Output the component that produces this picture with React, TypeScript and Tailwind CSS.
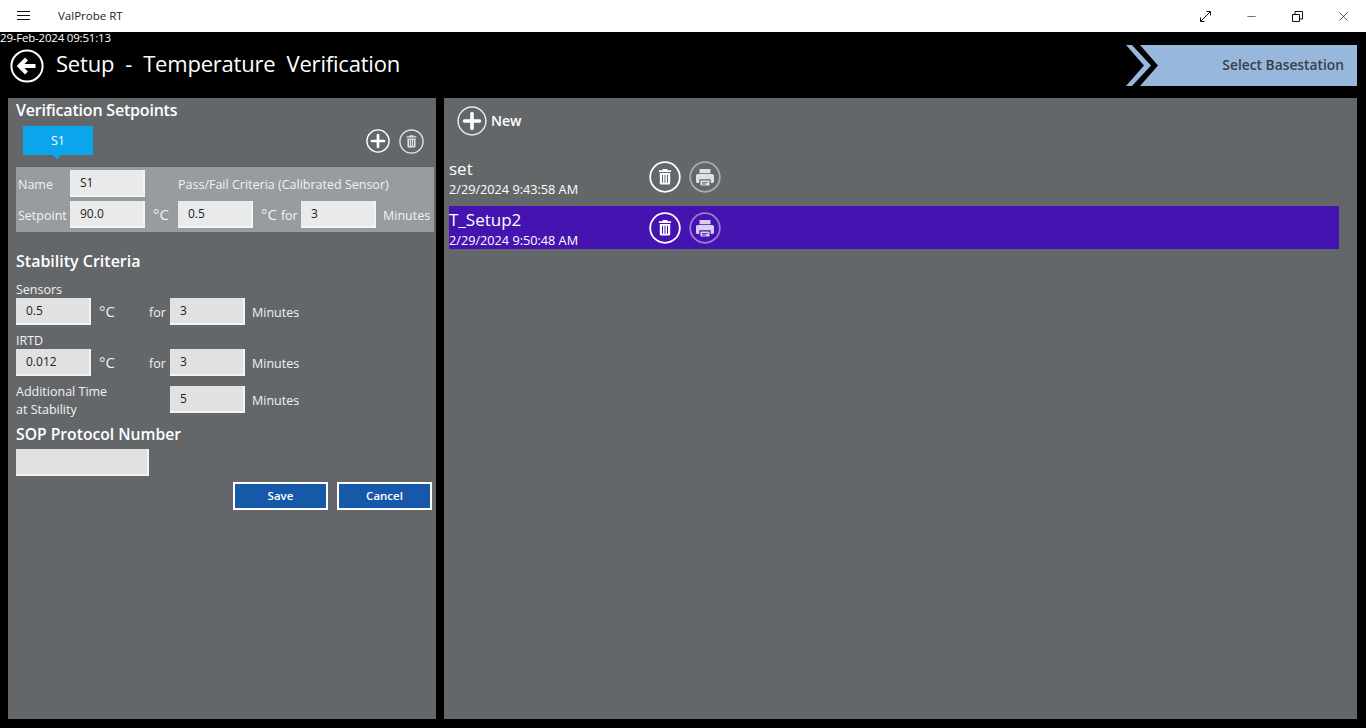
import { Minus, X } from 'lucide-react'

const font = { fontFamily: '"Open Sans", "Noto Sans", sans-serif' }

function Field({ value, className = 'w-[75px]', tone = 'bg-[#e0e1e0]' }: { value?: string; className?: string; tone?: string }) {
  return (
    <div className={`h-[27px] shrink-0 border-r-2 border-b-2 border-[#f4f4f4] pl-[10px] text-[12px] leading-[25px] text-[#222] ${tone} ${className}`}>
      {value}
    </div>
  )
}

function Ring({ size, opacity = '', children }: { size: number; opacity?: string; children: React.ReactNode }) {
  return (
    <svg width={size} height={size} viewBox="0 0 32 32" className={`shrink-0 ${opacity}`}>
      <circle cx="16" cy="16" r="14.8" fill="none" stroke="#fff" strokeWidth="1.8" />
      {children}
    </svg>
  )
}

function PlusIcon({ size }: { size: number }) {
  return (
    <Ring size={size}>
      <path d="M16 8v16M8 16h16" stroke="#fff" strokeWidth="3.600" strokeLinecap="round" />
    </Ring>
  )
}

function TrashIcon({ size, opacity }: { size: number; opacity?: string }) {
  return (
    <Ring size={size} opacity={opacity}>
      <path d="M13.5 8h5v1.3h3.6v1.7h-12.2v-1.7h3.6z" fill="#fff" />
      <path
        fillRule="evenodd"
        d="M10.8 12h10.4v10.2c0 .9-.7 1.4-1.400 1.400h-7.600c-.8 0-1.400-.6-1.400-1.400zM13 13.800v8h1v-8zM15.500 13.800v8h1v-8zM18 13.800v8h1v-8z"
        fill="#fff"
      />
    </Ring>
  )
}

function PrintIcon({ tint }: { tint: string }) {
  return (
    <svg width="32" height="32" viewBox="0 0 32 32" className="shrink-0">
      <circle cx="16" cy="16" r="14.800" fill="none" stroke="#fff" strokeOpacity="0.45" strokeWidth="1.800" />
      <g opacity="0.8">
        <path
          fillRule="evenodd"
          d="M10.500 8h11v4.200h-11zM8.800 13h14.400c1 0 1.800.8 1.800 1.800v5.700c0 .8-.6 1.400-1.400 1.400h-1.900v-3.600H10.300v3.600H8.400c-.8 0-1.400-.6-1.400-1.400v-5.700c0-1 .8-1.800 1.800-1.800z"
          fill="#fff"
        />
        <path d="M11.500 19.500h9v5h-9z" fill="#fff" />
      </g>
      <path d="M13 21h6v.8h-6zM13 22.600h4v.8h-4z" fill={tint} />
    </svg>
  )
}

function SetupRow({ name, date, active }: { name: string; date: string; active?: boolean }) {
  return (
    <div className={`flex h-[43px] items-center text-white ${active ? 'bg-[#4514b0]' : ''}`}>
      <div className="h-full w-[200px] shrink-0 pt-[3px]">
        <div className="text-[17px] leading-[22px]">{name}</div>
        <div className="mt-[1px] text-[12.7px] leading-[16px]">{date}</div>
      </div>
      <div className="flex gap-[8px]">
        <TrashIcon size={32} />
        <PrintIcon tint={active ? '#4514b0' : '#63676a'} />
      </div>
    </div>
  )
}

function Label({ children, className = '' }: { children: React.ReactNode; className?: string }) {
  return <span className={`shrink-0 pt-[3px] text-[12.5px] text-[#f2f2f2] ${className}`}>{children}</span>
}

export default function App() {
  return (
    <div style={font} className="flex h-[728px] w-full flex-col overflow-hidden bg-black">
      {/* title bar */}
      <div className="flex h-8 shrink-0 items-center bg-white text-black">
        <svg width="13" height="10" viewBox="0 0 13 10" className="ml-[17px]">
          <path d="M0 .5h13M0 4.500h13M0 8.500h13" stroke="#111" strokeWidth="1" />
        </svg>
        <span className="ml-[28px] text-[11.5px] text-[#222]">ValProbe RT</span>
        <div className="ml-auto flex">
          <span className="flex h-8 w-[46px] items-center justify-center">
            <svg width="11" height="11" viewBox="0 0 11 11" fill="none" stroke="#111">
              <path d="M.5 10.500l10-10M6.500.5h4v4M.5 6.500v4h4" />
            </svg>
          </span>
          <span className="flex h-8 w-[46px] items-center justify-center">
            <Minus size={13} strokeWidth={1} />
          </span>
          <span className="flex h-8 w-[46px] items-center justify-center">
            <svg width="11" height="11" viewBox="0 0 11 11" fill="none" stroke="#111">
              <path d="M.5 3.500h7v7h-7zM3 3V.5h7.500V8H8" />
            </svg>
          </span>
          <span className="flex h-8 w-[46px] items-center justify-center">
            <X size={15} strokeWidth={1} />
          </span>
        </div>
      </div>

      {/* header */}
      <div className="h-[66px] shrink-0 text-white">
        <div className="h-[12px] text-[11.5px] leading-[11px] tracking-[-0.2px]">29-Feb-2024 09:51:13</div>
        <div className="flex h-[54px] items-start">
          <svg width="34" height="34" viewBox="0 0 34 34" className="ml-[10px] mt-[5px]">
            <circle cx="17" cy="17" r="15.600" fill="none" stroke="#fff" strokeWidth="2" />
            <path d="M25.500 17H10M16.500 10l-7 7 7 7" fill="none" stroke="#fff" strokeWidth="4" />
          </svg>
          <span className="ml-[12px] whitespace-pre text-[22px] leading-[38px] tracking-[-0.2px]">Setup  -  Temperature  Verification</span>
          <div className="ml-auto mr-[9px] mt-[1px] flex h-[41px] w-[231px]">
            <svg width="32" height="41" viewBox="0 0 32 41" className="shrink-0">
              <path d="M0 0h6l19 20.500L6 41H0l18-20.500z" fill="#98b7dc" />
              <path d="M14 0h18v41H14l18-20.500z" fill="#98b7dc" />
            </svg>
            <div className="flex flex-1 items-center justify-end bg-[#98b7dc] pr-[13px] text-[13.8px] font-semibold text-[#3a4048]">
              Select Basestation
            </div>
          </div>
        </div>
      </div>

      {/* panels */}
      <div className="flex flex-1 gap-2 pb-[9px] pl-2 pr-[9px]">
        <section className="w-[428px] shrink-0 bg-[#63676a] px-2 text-white">
          <h2 className="mt-[2px] text-[16px] font-semibold leading-[20px] tracking-[-0.2px]">Verification Setpoints</h2>
          <div className="mt-[6px] flex h-[41px] items-start justify-between pl-[7px] pr-[4px]">
            <div className="relative flex h-[29px] w-[70px] items-center justify-center bg-[#0ba5ec] pt-[2px] text-[12.5px]">
              S1
              <span className="absolute -bottom-[3px] left-[31px] h-[6px] w-[6px] rotate-45 bg-[#0ba5ec]" />
            </div>
            <div className="mt-[3px] flex gap-[9px]">
              <PlusIcon size={24} />
              <TrashIcon size={25} opacity="opacity-80" />
            </div>
          </div>

          <div className="mr-[-6px] flex h-[65px] flex-col gap-[4px] bg-[#979c9f] pl-[2px] pt-[3px]">
            <div className="flex h-[27px] items-center">
              <Label className="w-[52px]">Name</Label>
              <Field value="S1" tone="bg-[#e9eaec]" />
              <Label className="ml-[33px]">Pass/Fail Criteria (Calibrated Sensor)</Label>
            </div>
            <div className="flex h-[27px] items-center">
              <Label className="w-[52px]">Setpoint</Label>
              <Field value="90.0" tone="bg-[#e9eaec]" />
              <span className="w-[33px] shrink-0 pl-[8px] text-[15px] text-[#f2f2f2]">°C</span>
              <Field value="0.5" tone="bg-[#e9eaec]" />
              <span className="flex w-[48px] shrink-0 items-baseline pl-[8px] text-[15px] text-[#f2f2f2]">
                °C<span className="ml-[4px] text-[12.5px]">for</span>
              </span>
              <Field value="3" tone="bg-[#e9eaec]" />
              <Label className="ml-[7px]">Minutes</Label>
            </div>
          </div>

          <h2 className="mt-[18px] text-[16px] font-semibold leading-[22px]">Stability Criteria</h2>
          <div className="mt-[9px] text-[12.5px] leading-[17px] text-[#f2f2f2]">Sensors</div>
          <div className="flex h-[27px] items-center">
            <Field value="0.5" />
            <span className="w-[58px] shrink-0 pl-[8px] text-[15px] text-[#f2f2f2]">°C</span>
            <Label className="w-[21px]">for</Label>
            <Field value="3" />
            <Label className="ml-[7px]">Minutes</Label>
          </div>
          <div className="mt-[7px] text-[12.5px] leading-[17px] text-[#f2f2f2]">IRTD</div>
          <div className="flex h-[27px] items-center">
            <Field value="0.012" />
            <span className="w-[58px] shrink-0 pl-[8px] text-[15px] text-[#f2f2f2]">°C</span>
            <Label className="w-[21px]">for</Label>
            <Field value="3" />
            <Label className="ml-[7px]">Minutes</Label>
          </div>
          <div className="mt-[10px] flex items-start">
            <div className="-mt-[3px] w-[154px] shrink-0 text-[12.5px] leading-[18px] text-[#f2f2f2]">
              Additional Time
              <br />
              at Stability
            </div>
            <Field value="5" />
            <Label className="ml-[7px] leading-[23px]">Minutes</Label>
          </div>
          <h2 className="mt-[4px] text-[15.7px] font-semibold leading-[22px]">SOP Protocol Number</h2>
          <Field className="mt-[4px] w-[133px]" />
          <div className="mr-[-4px] mt-[6px] flex justify-end gap-[9px]">
            <button type="button" className="h-[28px] w-[95px] border-2 border-white bg-[#1659a8] text-[11.5px] font-semibold">
              Save
            </button>
            <button type="button" className="h-[28px] w-[95px] border-2 border-white bg-[#1659a8] text-[11.5px] font-semibold">
              Cancel
            </button>
          </div>
        </section>

        <section className="flex-1 bg-[#63676a] pl-[5px] pr-[18px] text-white">
          <div className="ml-[8px] mt-[8px] flex h-[30px] items-center gap-[4px]">
            <svg width="30" height="30" viewBox="0 0 30 30">
              <circle cx="15" cy="15" r="13.900" fill="none" stroke="#fff" strokeOpacity="0.85" strokeWidth="1.500" />
              <path d="M15 7.500v15M7.500 15h15" stroke="#fff" strokeWidth="3.600" strokeLinecap="round" />
            </svg>
            <span className="-mt-[2px] text-[14px] font-semibold">New</span>
          </div>
          <div className="mt-[19px] flex flex-col gap-[8px]">
            <SetupRow name="set" date="2/29/2024 9:43:58 AM" />
            <SetupRow name="T_Setup2" date="2/29/2024 9:50:48 AM" active />
          </div>
        </section>
      </div>
    </div>
  )
}
